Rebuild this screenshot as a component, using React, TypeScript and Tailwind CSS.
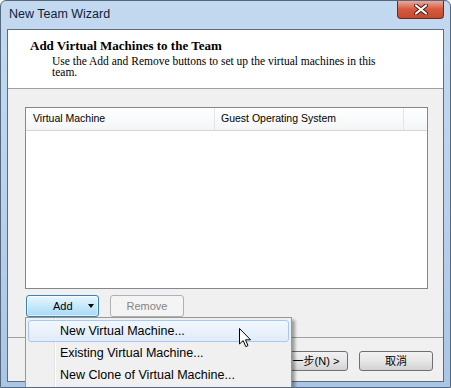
import React from "react";

const CloseGlyph = () => (
  <svg width="14" height="11" viewBox="0 0 14 11">
    <path
      d="M2 1.5 L12 9.5 M12 1.5 L2 9.5"
      stroke="#4a1a12"
      strokeWidth="4"
      strokeLinecap="round"
    />
    <path
      d="M2 1.5 L12 9.5 M12 1.5 L2 9.5"
      stroke="#ffffff"
      strokeWidth="2.2"
      strokeLinecap="round"
    />
  </svg>
);

const Cursor = () => (
  <svg width="13" height="20" viewBox="0 0 13 20">
    <path
      d="M0.5 0.5 L0.5 16 L4.2 12.6 L6.8 18.6 L9 17.6 L6.5 11.8 L11.5 11.8 Z"
      fill="#ffffff"
      stroke="#000000"
      strokeWidth="1"
      strokeLinejoin="miter"
    />
  </svg>
);

const menuItems = [
  "New Virtual Machine...",
  "Existing Virtual Machine...",
  "New Clone of Virtual Machine...",
];

export default function App() {
  return (
    <div className="relative w-[451px] h-[388px] overflow-hidden rounded-t-[6px] border border-[#55687d] bg-gradient-to-b from-[#c3d9f0] via-[#b9d2ec] to-[#a9c6e6] flex flex-col px-[6px] pb-[5px] font-['Liberation_Sans',Arial,sans-serif]">
      {/* title bar */}
      <div className="h-[28px] flex items-start justify-between">
        <div className="h-[27px] flex items-center pl-[2px] text-[12.5px] text-[#10213a]">
          New Team Wizard
        </div>
        <div className="w-[47px] h-[19px] mt-[-1px] rounded-b-[4px] border border-[#6b2a1e] border-t-0 bg-gradient-to-b from-[#eab3a6] via-[#d65a40] to-[#c64a2d] flex items-center justify-center shadow-[inset_0_1px_0_rgba(255,255,255,0.5)]">
          <CloseGlyph />
        </div>
      </div>

      {/* client area */}
      <div className="flex-1 flex flex-col border border-[#5f6b78] bg-[#f0f0f0]">
        <div className="h-[59px] bg-white border-b border-[#a0a0a0] pt-[8px] pl-[22px] font-['Liberation_Serif',serif] text-black">
          <div className="text-[13px] leading-[15px] font-bold">
            Add Virtual Machines to the Team
          </div>
          <div className="mt-[3px] pl-[22px] pr-[40px] text-[11.5px] leading-[11px]">
            Use the Add and Remove buttons to set up the virtual machines in this
            team.
          </div>
        </div>

        <div className="h-[248px] pt-[18px] pl-[17px]">
          <div className="w-[403px] h-[182px] border border-[#828790] bg-white">
            <div className="h-[23px] flex border-b border-[#d5d5d5] bg-gradient-to-b from-white to-[#f4f5f7] text-[10.5px] text-black">
              <div className="w-[189px] border-r border-[#e3e5e8] flex items-center pl-[7px]">
                Virtual Machine
              </div>
              <div className="w-[189px] border-r border-[#e3e5e8] flex items-center pl-[6px]">
                Guest Operating System
              </div>
              <div className="flex-1" />
            </div>
          </div>
          <div className="mt-[6px] pl-[1px] flex gap-[11px] text-[11px]">
            <div className="w-[73px] h-[22px] rounded-[3px] border border-[#3c7fb1] bg-gradient-to-b from-[#eaf6fd] via-[#c7e8fc] to-[#a8d9f6] flex items-center shadow-[inset_0_0_0_1px_rgba(255,255,255,0.6)]">
              <span className="ml-[26px] text-black">Add</span>
              <span className="ml-[15px] w-0 h-0 border-l-[3.5px] border-r-[3.5px] border-t-[4px] border-l-transparent border-r-transparent border-t-black" />
            </div>
            <div className="w-[74px] h-[22px] rounded-[3px] border border-[#adb2b5] bg-[#f4f4f4] flex items-center justify-center text-[#838383]">
              Remove
            </div>
          </div>
        </div>

        <div className="flex-1 border-t border-[#a0a0a0] pt-[13px] pr-[10px] flex justify-end gap-[11px] text-[11px] font-['Liberation_Sans','Noto_Sans_CJK_TC',sans-serif]">
          <div className="w-[75px] h-[20px] rounded-[3px] border border-[#707070] bg-gradient-to-b from-[#f2f2f2] via-[#e6e6e6] to-[#d2d2d2] flex items-center justify-center text-black">
            下一步(N) &gt;
          </div>
          <div className="w-[74px] h-[20px] rounded-[3px] border border-[#707070] bg-gradient-to-b from-[#f2f2f2] via-[#e6e6e6] to-[#d2d2d2] flex items-center justify-center text-black">
            取消
          </div>
        </div>
      </div>

      {/* dropdown menu */}
      <div className="absolute left-[24px] top-[316px] w-[267px] h-[90px] border border-[#979797] bg-[#f0f0f0] p-[2px] shadow-[3px_3px_3px_rgba(0,0,0,0.35)] text-[12.5px] text-black">
        <div className="absolute left-[28px] top-0 bottom-0 w-[2px] border-l border-[#e2e3e3] bg-white/0 border-r border-r-white" />
        {menuItems.map((label, i) => (
          <div
            key={label}
            className={
              i === 0
                ? "relative h-[22px] rounded-[3px] border border-[#a8c8ef] bg-gradient-to-b from-[#f1f7fe] to-[#e1ecfa] flex items-center pl-[31px]"
                : "relative h-[22px] flex items-center pl-[32px]"
            }
          >
            {label}
          </div>
        ))}
      </div>

      {/* mouse pointer */}
      <div className="absolute left-[238px] top-[327px]">
        <Cursor />
      </div>
    </div>
  );
}
